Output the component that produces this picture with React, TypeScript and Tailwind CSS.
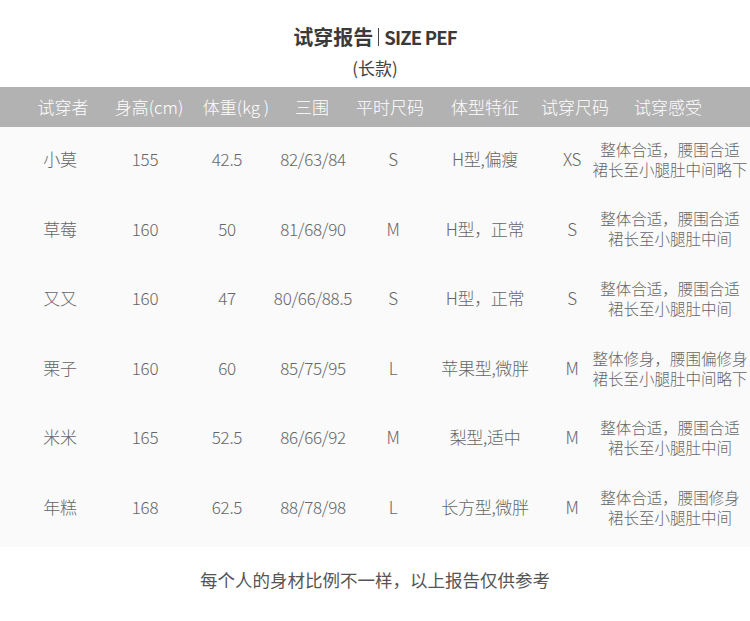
const FONT = '"Noto Sans CJK SC", "Noto Sans", sans-serif';

type Row = {
  name: string;
  height: string;
  weight: string;
  bust: string;
  usual: string;
  shape: string;
  tried: string;
  feel: [string, string];
};

const ROWS: Row[] = [
  { name: "小莫", height: "155", weight: "42.5", bust: "82/63/84", usual: "S", shape: "H型,偏瘦", tried: "XS", feel: ["整体合适，腰围合适", "裙长至小腿肚中间略下"] },
  { name: "草莓", height: "160", weight: "50", bust: "81/68/90", usual: "M", shape: "H型，正常", tried: "S", feel: ["整体合适，腰围合适", "裙长至小腿肚中间"] },
  { name: "又又", height: "160", weight: "47", bust: "80/66/88.5", usual: "S", shape: "H型，正常", tried: "S", feel: ["整体合适，腰围合适", "裙长至小腿肚中间"] },
  { name: "栗子", height: "160", weight: "60", bust: "85/75/95", usual: "L", shape: "苹果型,微胖", tried: "M", feel: ["整体修身，腰围偏修身", "裙长至小腿肚中间略下"] },
  { name: "米米", height: "165", weight: "52.5", bust: "86/66/92", usual: "M", shape: "梨型,适中", tried: "M", feel: ["整体合适，腰围合适", "裙长至小腿肚中间"] },
  { name: "年糕", height: "168", weight: "62.5", bust: "88/78/98", usual: "L", shape: "长方型,微胖", tried: "M", feel: ["整体合适，腰围修身", "裙长至小腿肚中间"] },
];

const HEADERS = ["试穿者", "身高(cm)", "体重(kg )", "三围", "平时尺码", "体型特征", "试穿尺码", "试穿感受"];

function Cell({ children }: { children: React.ReactNode }) {
  return <div className="flex justify-center whitespace-nowrap">{children}</div>;
}

export default function App() {
  return (
    <div className="w-[750px] h-[621px] bg-white" style={{ fontFamily: FONT }}>
      {/* title */}
      <div className="flex flex-col items-center pt-[23px]">
        <div className="flex items-center h-[28px] text-[20px] font-bold text-[#3a3a3a] leading-[28px]">
          <span>试穿报告</span>
          <span className="mx-[5px] inline-block w-px h-[18px] bg-[#444]" />
          <span className="text-[18.5px] tracking-[-0.8px]">SIZE PEF</span>
        </div>
        <div className="mt-[5px] text-[17px] leading-[24px] text-[#444]">(长款)</div>
      </div>

      {/* header bar */}
      <div className="mt-[7px] h-[40px] bg-[#b3b2b2] grid grid-cols-[126px_46px_128px_24px_132px_58px_122px_64px] items-center text-[17px] font-light text-white">
        {HEADERS.map((h) => (
          <Cell key={h}>{h}</Cell>
        ))}
      </div>

      {/* body */}
      <div className="bg-[#fafafa] pb-[2px]">
        {ROWS.map((r) => (
          <div
            key={r.name}
            className="h-[69.6px] pb-[6px] grid grid-cols-[120px_50px_114px_58px_102px_82px_92px_104px] items-center text-[17px] font-light tracking-[-0.3px] text-[#666]"
          >
            <Cell>{r.name}</Cell>
            <Cell>{r.height}</Cell>
            <Cell>{r.weight}</Cell>
            <Cell>{r.bust}</Cell>
            <Cell>{r.usual}</Cell>
            <Cell>{r.shape}</Cell>
            <Cell>{r.tried}</Cell>
            <div className="flex flex-col items-center whitespace-nowrap text-[15.5px] tracking-normal leading-[20px]">
              <span>{r.feel[0]}</span>
              <span>{r.feel[1]}</span>
            </div>
          </div>
        ))}
      </div>

      <div className="mt-[21px] text-center text-[17.5px] leading-[24px] text-[#555]">
        每个人的身材比例不一样，以上报告仅供参考
      </div>
    </div>
  );
}
